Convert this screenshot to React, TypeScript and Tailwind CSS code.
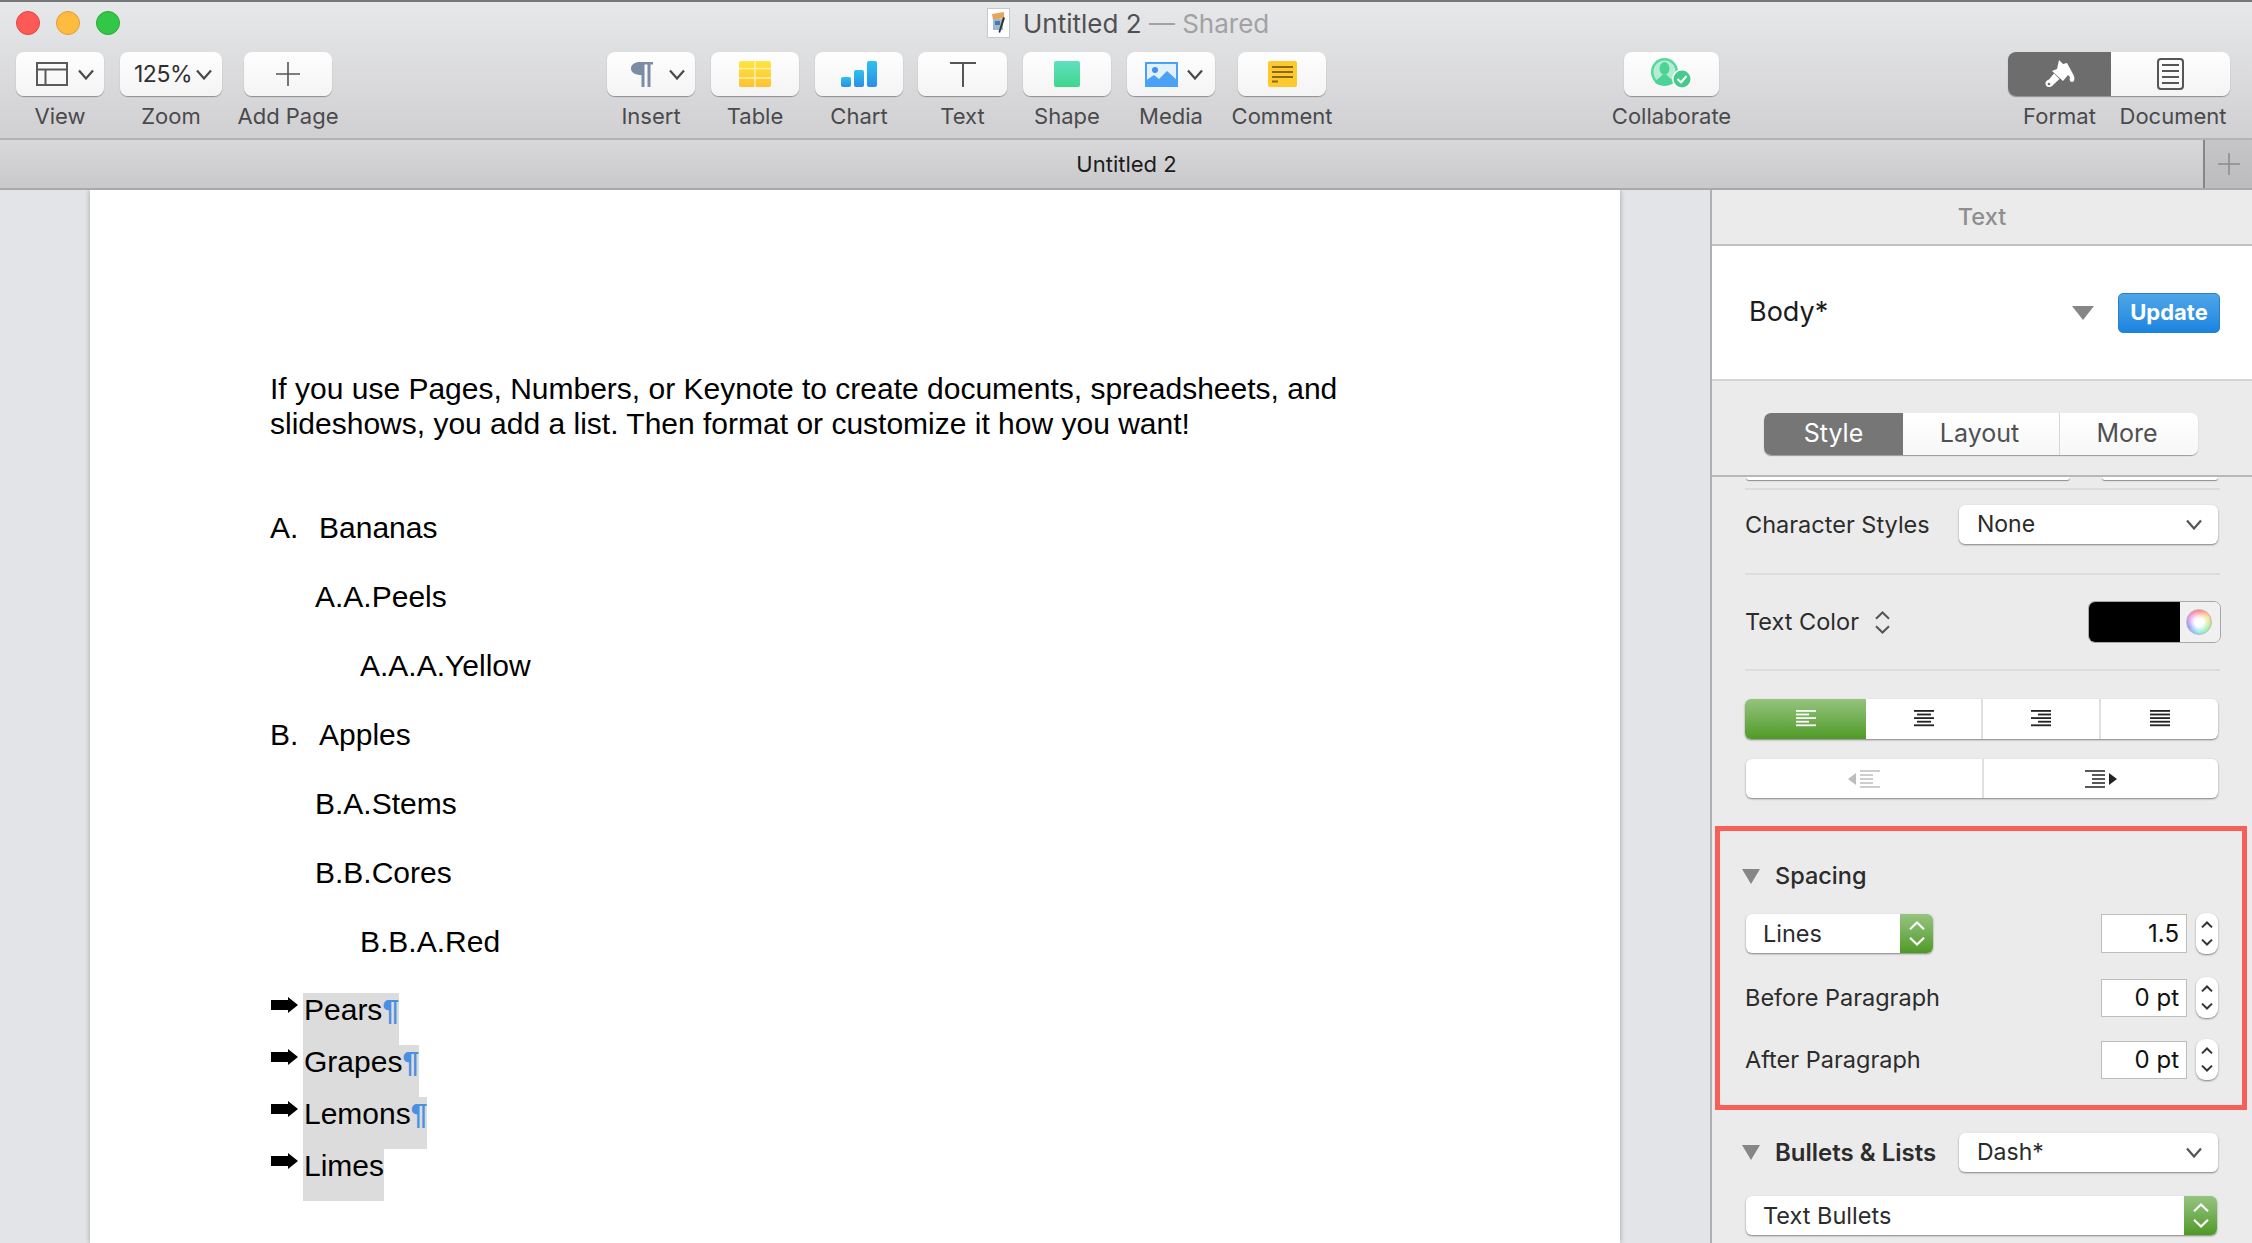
import React from 'react';

function Chevron({ className = '', color = '#4a4a4a' }: { className?: string; color?: string }) {
  return (
    <svg width="16" height="11" viewBox="0 0 16 11" className={className}>
      <path d="M1 1.5 L8 9.5 L15 1.5" fill="none" stroke={color} strokeWidth="2.2" />
    </svg>
  );
}

function UpDown({ color = '#333', w = 14, h = 22, sw = 2 }: { color?: string; w?: number; h?: number; sw?: number }) {
  const ch = w * 0.45;
  const a = w - 1;
  const m = w / 2;
  return (
    <svg width={w} height={h} viewBox={`0 0 ${w} ${h}`}>
      <path
        d={`M1 ${ch + 1} L${m} 1.5 L${a} ${ch + 1} M1 ${h - ch - 1} L${m} ${h - 1.5} L${a} ${h - ch - 1}`}
        fill="none"
        stroke={color}
        strokeWidth={sw}
      />
    </svg>
  );
}

function Triangle() {
  return (
    <svg width="18" height="15" viewBox="0 0 18 15">
      <path d="M0 0 H18 L9 15 Z" fill="#868686" />
    </svg>
  );
}

function ToolItem({ w, label, className = '', children }: { w: string; label: string; className?: string; children: React.ReactNode }) {
  return (
    <div className={`flex flex-col items-center ${w} ${className}`}>
      <div className="flex h-[44px] w-full items-center justify-center rounded-[8px] bg-gradient-to-b from-[#fefefe] to-[#f4f4f4] shadow-[0_1px_1px_rgba(0,0,0,0.35)]">
        {children}
      </div>
      <div className="mt-[8px] whitespace-nowrap text-[22px] leading-[25px] text-[#4a4a4c]">{label}</div>
    </div>
  );
}

function Lines({ rows, color = '#222' }: { rows: number[][]; color?: string }) {
  return (
    <svg width="20" height="18" viewBox="0 0 20 18">
      {rows.map(([x, w], i) => (
        <rect key={i} x={x} y={i * 3.6} width={w} height="1.8" fill={color} />
      ))}
    </svg>
  );
}

function StepperInput({ value, h, className = '' }: { value: string; h: string; className?: string }) {
  return (
    <div className={`flex items-center ${className}`}>
      <div className={`flex w-[86px] items-center justify-end border border-[#bdbdbd] bg-white pr-[7px] text-[24px] text-[#111] ${h}`}>{value}</div>
      <div className="ml-[9px] flex h-[41px] w-[22px] items-center justify-center rounded-[9px] bg-white shadow-[0_1px_2px_rgba(0,0,0,0.45)]">
        <UpDown w={12} h={25} sw={2} />
      </div>
    </div>
  );
}

function GreenStepper() {
  return (
    <div className="flex h-full w-[33px] items-center justify-center rounded-r-[6px] bg-gradient-to-b from-[#97c480] to-[#4e9a22]">
      <UpDown color="#fff" w={16} h={25} sw={2.2} />
    </div>
  );
}

function Select({ label, className = '' }: { label: string; className?: string }) {
  return (
    <div className={`flex h-[39px] items-center justify-between rounded-[6px] bg-white pl-[18px] pr-[16px] text-[23px] text-[#2a2a2a] shadow-[0_1px_2px_rgba(0,0,0,0.45)] ${className}`}>
      <span>{label}</span>
      <Chevron color="#555" />
    </div>
  );
}

const page = 'w-[2252px] h-[1243px] overflow-hidden bg-[#ebebeb] font-[Inter,sans-serif]';

export default function App() {
  const list = [
    { n: 'A.', t: 'Bananas', cls: '' },
    { n: '', t: 'A.A.Peels', cls: 'pl-[45px]' },
    { n: '', t: 'A.A.A.Yellow', cls: 'pl-[90px]' },
    { n: 'B.', t: 'Apples', cls: '' },
    { n: '', t: 'B.A.Stems', cls: 'pl-[45px]' },
    { n: '', t: 'B.B.Cores', cls: 'pl-[45px]' },
    { n: '', t: 'B.B.A.Red', cls: 'pl-[90px]' },
  ];
  const fruits = [
    { t: 'Pears', mark: true },
    { t: 'Grapes', mark: true },
    { t: 'Lemons', mark: true },
    { t: 'Limes', mark: false },
  ];

  return (
    <div className={page}>
      {/* Toolbar */}
      <div className="h-[140px] border-b-2 border-t-2 border-b-[#b4b4b6] border-t-[#77777a] bg-gradient-to-b from-[#e7e8ea] to-[#d0d0d2]">
        <div className="flex h-[42px] items-center pl-4">
          <div className="flex gap-4">
            <div className="h-[24px] w-[24px] rounded-full border border-[#e0443e] bg-[#fc5a56]" />
            <div className="h-[24px] w-[24px] rounded-full border border-[#dea034] bg-[#fdbc40]" />
            <div className="h-[24px] w-[24px] rounded-full border border-[#27aa35] bg-[#33c748]" />
          </div>
          <svg width="23" height="30" viewBox="0 0 23 30" className="ml-[867px]">
            <rect x="0.5" y="0.5" width="22" height="29" fill="#fff" stroke="#c8c8c8" />
            <path d="M5 6 L17 4 L17 10 L6 12 Z" fill="#e8a55a" />
            <rect x="6" y="11" width="10" height="11" fill="#9fb9cf" />
            <rect x="8" y="13" width="5" height="4" fill="#3f7fb5" />
            <path d="M16 9 L18 10 L13 25 L11.5 24 Z" fill="#333" />
          </svg>
          <div className="ml-[13px] whitespace-nowrap text-[26px] text-[#505052]">
            Untitled 2 <span className="text-[#a2a2a4]">— Shared</span>
          </div>
        </div>

        <div className="mt-[8px] flex items-start pl-4">
          <ToolItem w="w-[88px]" label="View">
            <svg width="32" height="24" viewBox="0 0 32 24" className="ml-[10px] mr-[10px]">
              <path d="M1 1 H31 V23 H1 Z M1 7.5 H31 M9.5 7.5 V23" fill="none" stroke="#5a5a5a" strokeWidth="2" />
            </svg>
            <Chevron />
          </ToolItem>
          <ToolItem w="w-[102px]" label="Zoom" className="ml-4">
            <span className="ml-[4px] text-[23px] tracking-[-0.5px] text-[#2e2e2e]">125%</span>
            <Chevron className="ml-[4px]" />
          </ToolItem>
          <ToolItem w="w-[88px]" label="Add Page" className="ml-[22px]">
            <svg width="26" height="26" viewBox="0 0 26 26">
              <path d="M13 1 V25 M1 13 H25" stroke="#555" strokeWidth="1.6" />
            </svg>
          </ToolItem>

          <ToolItem w="w-[88px]" label="Insert" className="ml-[275px]">
            <svg width="22" height="27" viewBox="0 0 22 27" className="ml-[14px] mr-[16px]">
              <path d="M9 1 H22 V3.5 H19.5 V26 H16.5 V3.5 H13.5 V26 H10.5 V14 C4 14 0 11.5 0 7.5 C0 3.5 4 1 9 1 Z" fill="#7b8ca4" />
            </svg>
            <Chevron />
          </ToolItem>
          <ToolItem w="w-[88px]" label="Table" className="ml-4">
            <svg width="32" height="26" viewBox="0 0 32 26">
              <defs>
                <linearGradient id="tbl" x1="0" y1="0" x2="0" y2="1">
                  <stop offset="0" stopColor="#ffe43f" />
                  <stop offset="1" stopColor="#ffc132" />
                </linearGradient>
              </defs>
              <rect width="32" height="26" rx="2" fill="url(#tbl)" />
              <path d="M0 7.5 H32 M0 17 H32 M16 0 V26" stroke="#fff3a8" strokeWidth="1.6" />
            </svg>
          </ToolItem>
          <ToolItem w="w-[88px]" label="Chart" className="ml-4">
            <svg width="36" height="26" viewBox="0 0 36 26">
              <defs>
                <linearGradient id="bar" x1="0" y1="0" x2="0" y2="1">
                  <stop offset="0" stopColor="#2fc0ef" />
                  <stop offset="1" stopColor="#2a8fe8" />
                </linearGradient>
              </defs>
              <rect x="0" y="16" width="10" height="10" rx="2" fill="url(#bar)" />
              <rect x="13" y="9" width="10" height="17" rx="2" fill="url(#bar)" />
              <rect x="26" y="0" width="10" height="26" rx="2" fill="url(#bar)" />
            </svg>
          </ToolItem>
          <ToolItem w="w-[89px]" label="Text" className="ml-[15px]">
            <svg width="26" height="25" viewBox="0 0 26 25">
              <path d="M0 1 H26 M13 1 V25" stroke="#555" strokeWidth="2" />
            </svg>
          </ToolItem>
          <ToolItem w="w-[88px]" label="Shape" className="ml-4">
            <div className="h-[26px] w-[26px] rounded-[2px] bg-gradient-to-b from-[#5fe0c0] to-[#3ed68c]" />
          </ToolItem>
          <ToolItem w="w-[88px]" label="Media" className="ml-4">
            <svg width="33" height="25" viewBox="0 0 33 25" className="ml-[6px] mr-[9px]">
              <rect width="33" height="25" fill="#4aa2f8" />
              <rect x="2" y="2" width="29" height="20" fill="#e3f0fd" />
              <circle cx="10" cy="8" r="3" fill="#3f92ea" />
              <path d="M0 25 V19 L9 13 L14 17 L22 9 L33 19 V25 Z" fill="#4aa2f8" />
            </svg>
            <Chevron />
          </ToolItem>
          <ToolItem w="w-[88px]" label="Comment" className="ml-[23px]">
            <svg width="29" height="26" viewBox="0 0 29 26">
              <rect width="29" height="26" rx="2" fill="#fdc92f" />
              <path d="M4 6 H25 M4 11 H25 M4 16 H25 M4 20.5 H10" stroke="#8a6a10" strokeWidth="2" />
            </svg>
          </ToolItem>

          <ToolItem w="w-[95px]" label="Collaborate" className="ml-[298px]">
            <svg width="41" height="32" viewBox="0 0 41 32">
              <ellipse cx="13.5" cy="14" rx="13.5" ry="14" fill="#55d8a0" />
              <ellipse cx="13.5" cy="14" rx="11" ry="11.5" fill="#b4edd3" />
              <ellipse cx="13.5" cy="10.5" rx="5" ry="6.5" fill="#4fd394" />
              <path d="M4 25 C5 21 9 20 11 17 H16 C18 20 22 21 23 25 C19 28 8 28 4 25 Z" fill="#4fd394" />
              <circle cx="31" cy="21" r="10" fill="#fff" />
              <circle cx="31" cy="21" r="8.5" fill="#45c98c" />
              <path d="M26.5 21 L30 24.5 L35.5 18" fill="none" stroke="#fff" strokeWidth="2" />
            </svg>
          </ToolItem>

          <div className="ml-[289px] flex w-[222px] flex-col">
            <div className="flex h-[44px] overflow-hidden rounded-[8px] shadow-[0_1px_1px_rgba(0,0,0,0.35)]">
              <div className="flex w-[103px] items-center justify-center bg-[#6d6d6d]">
                <svg width="30" height="28" viewBox="0 0 30 28">
                  <path d="M14 0 L18 4 L22 3 L28 14 C30 17 30 22 27 22 C24.5 22 24.5 19 25 17 L23 15 L18 21 L7 11 L12 9 Z" fill="#fff" />
                  <path d="M9 13.5 L14.5 19 L8 25 C5.5 28.5 0 27.5 0.5 23 C0.8 21 2.5 20 4 19.5 Z" fill="#fff" />
                  <circle cx="4" cy="24" r="1.3" fill="#6d6d6d" />
                </svg>
              </div>
              <div className="flex flex-1 items-center justify-center bg-gradient-to-b from-[#fefefe] to-[#f4f4f4]">
                <svg width="27" height="32" viewBox="0 0 27 32">
                  <rect x="1" y="1" width="25" height="30" rx="3" fill="none" stroke="#555" strokeWidth="2" />
                  <path d="M5 7 H22 M5 13 H22 M5 19 H22 M5 25 H22" stroke="#555" strokeWidth="2" />
                </svg>
              </div>
            </div>
            <div className="mt-[8px] flex whitespace-nowrap text-[22px] leading-[25px] text-[#4a4a4c]">
              <span className="w-[103px] text-center">Format</span>
              <span className="flex-1 pl-[5px] text-center">Document</span>
            </div>
          </div>
        </div>
      </div>

      {/* Tab bar */}
      <div className="flex h-[50px] border-b-2 border-b-[#a9a9ab] bg-gradient-to-b from-[#d8d8da] to-[#c9c9cb]">
        <div className="flex flex-1 items-center justify-center pl-[50px] text-[22px] text-[#1c1c1c]">Untitled 2</div>
        <div className="flex w-[49px] items-center justify-center border-l-2 border-l-[#868688] bg-gradient-to-b from-[#c6c6c8] to-[#bcbcbe]">
          <svg width="22" height="22" viewBox="0 0 22 22">
            <path d="M11 0 V22 M0 11 H22" stroke="#8b8b8d" strokeWidth="1.5" />
          </svg>
        </div>
      </div>

      <div className="flex h-[1053px]">
        {/* Canvas */}
        <div className="w-[1710px] overflow-hidden bg-[#e3e4e8] pl-[90px]">
          <div className="h-full w-[1530px] bg-white pl-[180px] pt-[182px] font-['Liberation_Sans',sans-serif] text-[30px] text-black shadow-[0_0_5px_rgba(0,0,0,0.3)]">
            <p className="w-[1140px] leading-[34.5px]">
              If you use Pages, Numbers, or Keynote to create documents, spreadsheets, and slideshows, you add a list. Then format or customize it how you want!
            </p>
            <div className="mt-[52px]">
              {list.map((row) => (
                <div key={row.t} className={`flex h-[69px] items-center ${row.cls}`}>
                  {row.n && <span className="w-[49px]">{row.n}</span>}
                  <span>{row.t}</span>
                </div>
              ))}
            </div>
            <div className="mt-[17px]">
              {fruits.map((f) => (
                <div key={f.t} className="flex h-[52px] items-start">
                  <svg width="27" height="16" viewBox="0 0 27 16" className="ml-px mr-[5px] mt-[4px]">
                    <path d="M0 3 H17 V0 L27 8 L17 16 V13 H0 Z" fill="#000" />
                  </svg>
                  <div className="flex h-full items-start bg-[#dcdcdc] pl-px leading-[34px]">
                    <span>{f.t}</span>
                    {f.mark && <span className="font-bold text-[#4a90e2]">¶</span>}
                  </div>
                </div>
              ))}
            </div>
          </div>
        </div>

        {/* Format sidebar */}
        <div className="w-[542px] border-l-2 border-l-[#b0b0b0] text-[23.5px] text-[#2c2c2c]">
          <div className="flex h-[56px] items-center justify-center border-b-2 border-b-[#c0c0c2] font-medium text-[#8e8e90]">Text</div>
          <div className="flex h-[135px] items-center border-b-2 border-b-[#d4d4d4] bg-white pl-[37px] pr-[32px]">
            <span className="text-[27px] text-[#1c1c1c]">Body*</span>
            <svg width="22" height="14" viewBox="0 0 22 14" className="ml-auto mr-[24px]">
              <path d="M0 0 H22 L11 14 Z" fill="#868686" />
            </svg>
            <div className="flex h-[40px] w-[102px] items-center justify-center rounded-[5px] border border-[#2f7fc2] bg-gradient-to-b from-[#4ea6e8] to-[#1884e0] text-[22px] font-bold text-white">Update</div>
          </div>
          <div className="flex h-[96px] items-start border-b-2 border-b-[#b8b8ba] pl-[52px] pt-[32px] text-[25px]">
            <div className="flex h-[42px] w-[434px] overflow-hidden rounded-[7px] bg-gradient-to-b from-[#ffffff] to-[#f7f7f7] text-[#505052] shadow-[0_1px_1px_rgba(0,0,0,0.35)]">
              <div className="flex w-[139px] items-center justify-center bg-[#767676] text-white">Style</div>
              <div className="flex w-[157px] items-center justify-center border-r border-r-[#d8d8d8] pr-[3px]">Layout</div>
              <div className="flex flex-1 items-center justify-center pr-[4px]">More</div>
            </div>
          </div>

          <div className="pl-[33px] pr-[32px]">
            {/* Clipped row scrolled under the tabs */}
            <div className="flex h-[3px] gap-[32px] pl-px">
              <div className="h-[3px] w-[324px] rounded-b-[6px] bg-white shadow-[0_1px_1px_rgba(0,0,0,0.4)]" />
              <div className="h-[3px] w-[116px] rounded-b-[6px] bg-white shadow-[0_1px_1px_rgba(0,0,0,0.4)]" />
            </div>
            <div className="mt-[8px] h-[2px] bg-[#dcdcdc]" />

            <div className="mt-[15px] flex items-center justify-between">
              <span>Character Styles</span>
              <Select label="None" className="mr-[2px] w-[259px]" />
            </div>
            <div className="mt-[29px] h-[2px] bg-[#dcdcdc]" />

            <div className="mt-[26px] flex h-[42px] items-center">
              <span>Text Color</span>
              <span className="ml-[16px] flex"><UpDown color="#555" w={15} h={23} /></span>
              <div className="-mr-px ml-auto flex h-[42px] w-[133px] overflow-hidden rounded-[7px] border border-[#a8a8a8]">
                <div className="w-[91px] bg-black" />
                <div className="flex flex-1 items-center justify-center bg-[#f0f0f0] pr-[2px]">
                  <div className="h-[26px] w-[26px] rounded-full border border-[#bbb] bg-[radial-gradient(circle,#ffffff_25%,transparent_75%),conic-gradient(#ff6b6b,#ffd36b,#8df08a,#6be8e8,#7a8dff,#f07ae0,#ff6b6b)]" />
                </div>
              </div>
            </div>
            <div className="mt-[26px] h-[2px] bg-[#dcdcdc]" />

            <div className="mt-[28px] flex h-[40px] w-[473px] overflow-hidden rounded-[6px] bg-white shadow-[0_1px_2px_rgba(0,0,0,0.45)]">
              <div className="flex w-[121px] items-center justify-center bg-gradient-to-b from-[#95c37c] to-[#4f9b22]">
                <Lines color="#fff" rows={[[0, 20], [0, 13], [0, 20], [0, 13], [0, 20]]} />
              </div>
              <div className="flex w-[117px] items-center justify-center border-r-2 border-r-[#e0e0e0]">
                <Lines rows={[[0, 20], [3, 14], [0, 20], [3, 14], [0, 20]]} />
              </div>
              <div className="flex w-[118px] items-center justify-center border-r-2 border-r-[#e0e0e0]">
                <Lines rows={[[0, 20], [7, 13], [0, 20], [7, 13], [0, 20]]} />
              </div>
              <div className="flex flex-1 items-center justify-center">
                <Lines rows={[[0, 20], [0, 20], [0, 20], [0, 20], [0, 20]]} />
              </div>
            </div>

            <div className="ml-px mt-[20px] flex h-[39px] w-[472px] rounded-[6px] bg-white shadow-[0_1px_2px_rgba(0,0,0,0.45)]">
              <div className="flex w-[238px] items-center justify-center border-r-2 border-r-[#e0e0e0]">
                <svg width="32" height="18" viewBox="0 0 32 18">
                  <path d="M8 3 V15 L0 9 Z" fill="#bdbdbd" />
                  <path d="M12 1 H32 M12 5 H25 M12 9 H25 M12 13 H25 M12 17 H32" stroke="#bdbdbd" strokeWidth="1.7" />
                </svg>
              </div>
              <div className="flex flex-1 items-center justify-center">
                <svg width="32" height="18" viewBox="0 0 32 18">
                  <path d="M24 3 V15 L32 9 Z" fill="#222" />
                  <path d="M0 1 H20 M7 5 H20 M7 9 H20 M7 13 H20 M0 17 H20" stroke="#222" strokeWidth="1.7" />
                </svg>
              </div>
            </div>
          </div>

          {/* Highlighted spacing section */}
          <div className="ml-[3px] mr-[5px] mt-[28px] h-[284px] border-[5px] border-[#f65f57] pl-[22px] pr-[24px]">
            <div className="mt-[34px] flex h-[22px] items-center">
              <Triangle />
              <span className="ml-[15px] font-medium">Spacing</span>
            </div>
            <div className="mt-[26px] flex items-center justify-between">
              <div className="ml-[4px] flex h-[39px] w-[187px] rounded-[6px] bg-white pl-[17px] shadow-[0_1px_2px_rgba(0,0,0,0.45)]">
                <span className="flex-1 self-center">Lines</span>
                <GreenStepper />
              </div>
              <StepperInput value="1.5" h="h-[39px]" />
            </div>
            <div className="mt-[23px] flex items-center justify-between pl-[3px]">
              <span>Before Paragraph</span>
              <StepperInput value="0 pt" h="h-[38px]" />
            </div>
            <div className="mt-[21px] flex items-center justify-between pl-[3px]">
              <span>After Paragraph</span>
              <StepperInput value="0 pt" h="h-[38px]" />
            </div>
          </div>

          <div className="pl-[30px] pr-[34px]">
            <div className="mt-[23px] flex items-center">
              <Triangle />
              <span className="ml-[15px] text-[24px] font-semibold">Bullets &amp; Lists</span>
              <Select label="Dash*" className="ml-auto w-[259px]" />
            </div>
            <div className="ml-[4px] mt-[24px] flex h-[39px] w-[471px] rounded-[6px] bg-white pl-[17px] shadow-[0_1px_2px_rgba(0,0,0,0.45)]">
              <span className="flex-1 self-center">Text Bullets</span>
              <GreenStepper />
            </div>
          </div>
        </div>
      </div>
    </div>
  );
}
